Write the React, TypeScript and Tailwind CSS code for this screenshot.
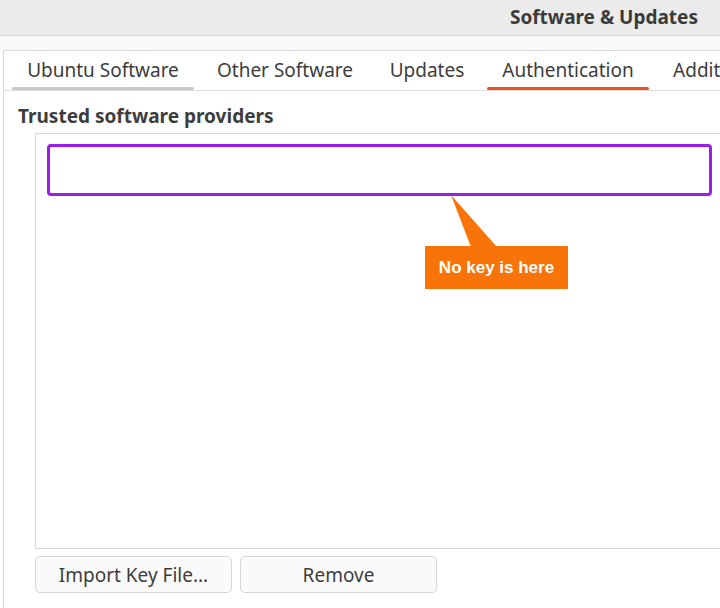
const tabs = [
  { label: 'Ubuntu Software', w: 'w-[182px]', line: 'bg-[#c8c8c8]' },
  { label: 'Other Software', w: 'w-[164px]', line: '' },
  { label: 'Updates', w: 'w-[102px]', line: '' },
  { label: 'Authentication', w: 'w-[162px]', line: 'bg-[#e95420]' },
  { label: 'Additional Drivers', w: 'w-[190px]', line: '' },
];

export default function App() {
  return (
    <div className="w-[720px] h-[608px] overflow-hidden bg-white text-[#3d3d3d] font-['Noto_Sans',sans-serif]">
      {/* header bar */}
      <div className="h-[36px] bg-[#ebebeb] border-b border-[#d4d4d4] flex items-center justify-end pr-[22px]">
        <span className="text-[19px] font-bold text-[#3a3a3a]">Software &amp; Updates</span>
      </div>
      <div className="h-[14px] bg-[#f8f8f8]" />

      {/* notebook */}
      <div className="ml-[3px] h-[558px] border-t border-l border-[#d8d8d8] bg-white flex flex-col overflow-hidden">
        <div className="h-[40px] flex items-stretch gap-[9px] pl-[8px] border-b border-[#dcdcdc] shrink-0">
          {tabs.map((t) => (
            <div key={t.label} className={`${t.w} shrink-0 relative flex items-center justify-center text-[19px] whitespace-nowrap`}>
              <span>{t.label}</span>
              {t.line && <div className={`absolute left-0 right-0 bottom-[0px] h-[3px] rounded-full ${t.line}`} />}
            </div>
          ))}
        </div>

        <div className="pl-[14px] pt-[12px] text-[19px] font-bold leading-[26px]">Trusted software providers</div>

        <div className="ml-[31px] mt-[4px] w-[700px] h-[416px] border border-[#d8d8d8] bg-white pt-[10px] pl-[11px] relative shrink-0">
          <div className="w-[665px] h-[52px] border-[3px] border-[#9b1de8] rounded-[4px]" />
          {/* callout */}
          <svg className="absolute left-[413px] top-[61px]" width="50" height="53" viewBox="0 0 50 53">
            <polygon points="2,0 22,52 48,52" fill="#f97408" />
          </svg>
          <div className="absolute left-[389px] top-[112px] w-[143px] h-[43px] bg-[#f97408] flex items-center justify-center">
            <span className="text-white font-bold text-[17px] font-['Liberation_Sans',sans-serif]">No key is here</span>
          </div>
        </div>

        <div className="ml-[31px] mt-[7px] flex gap-[8px]">
          <button className="w-[197px] h-[37px] pt-[2px] border border-[#d6d6d6] rounded-[5px] bg-[#fafafa] text-[19px] text-[#3d3d3d]">Import Key File...</button>
          <button className="w-[197px] h-[37px] pt-[2px] border border-[#d6d6d6] rounded-[5px] bg-[#fafafa] text-[19px] text-[#3d3d3d]">Remove</button>
        </div>
      </div>
    </div>
  );
}
